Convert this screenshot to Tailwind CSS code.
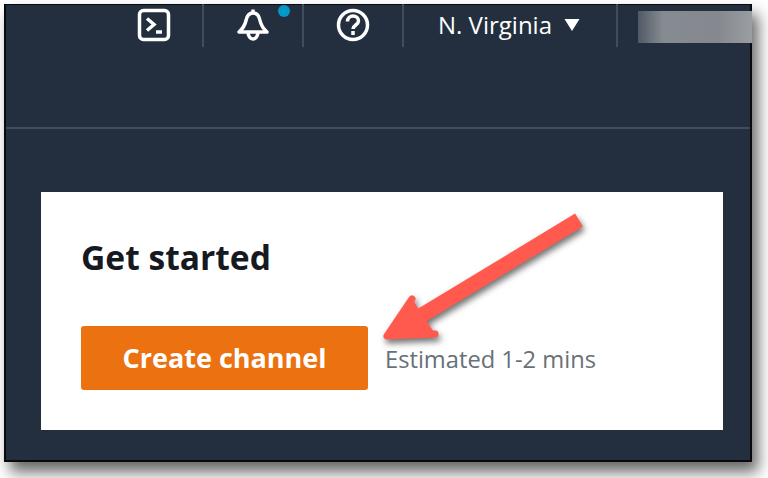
<!DOCTYPE html>
<html lang="en">
<head>
    <meta charset="UTF-8">
    <meta name="viewport" content="width=device-width, initial-scale=1.0">
    <title>Get started</title>
    <script src="https://cdn.jsdelivr.net/npm/@tailwindcss/browser@4"></script>
</head>
<body class="bg-white w-[768px] h-[478px] overflow-hidden font-['Open_Sans','Noto_Sans',sans-serif]">

    <!-- Window -->
    <div class="relative ml-[4px] mt-[4px] w-[748px] h-[458px] bg-[#232f3e] border-2 border-t border-[#0a0a0a] border-b-[2px] shadow-[6px_10px_14px_rgba(0,0,0,0.6)]">

        <!-- Top nav -->
        <div class="flex h-[43px] pl-[98px] items-start">
            <!-- Terminal -->
            <div class="relative shrink-0 w-[100px] h-[43px] flex items-center justify-center border-r-2 border-[#414d5c] -mt-[1px]">
                <svg width="34" height="34" viewBox="0 0 34 34" fill="none" stroke="white" stroke-width="3.500" class="-mt-[2px] ml-[2px]">
                    <rect x="2.500" y="2.500" width="29" height="29" rx="4"/>
                    <path d="M10 10.500l7 6-7 6"/>
                    <path d="M19 24h6"/>
                </svg>
            </div>
            <!-- Bell -->
            <div class="relative shrink-0 w-[100px] h-[43px] flex items-center justify-center border-r-2 border-[#414d5c] -mt-[1px]">
                <svg width="34" height="36" viewBox="0 0 34 36" fill="none" stroke="white" stroke-width="3.500" stroke-linejoin="round" class="-mt-[1px]">
                    <path d="M3 25C7 21.500 9 18 10 13.500C11 8.500 13.500 6 17 6C20.500 6 23 8.500 24 13.500C25 18 27 21.500 31 25Z"/>
                    <path d="M17 2.500v3.500"/>
                    <path d="M12 25c0 4 2.200 7 5 7s5-3 5-7"/>
                </svg>
                <span class="absolute left-[74px] top-[1px] w-[12px] h-[12px] rounded-full bg-[#0397c7]"></span>
            </div>
            <!-- Help -->
            <div class="shrink-0 w-[100px] h-[43px] flex items-center justify-center border-r-2 border-[#414d5c] -mt-[1px]">
                <svg width="34" height="34" viewBox="0 0 34 34" fill="none" stroke="white" stroke-width="3.500" class="-mt-[2px]">
                    <circle cx="17" cy="17" r="14.500"/>
                    <path d="M11.500 13.500c0-3.500 2.500-5.500 5.500-5.500s5.500 2 5.500 5c0 4-5.500 4-5.500 8"/>
                    <path d="M17 23v4"/>
                </svg>
            </div>
            <!-- Region -->
            <div class="shrink-0 w-[214px] h-[43px] flex items-center pl-[34px] gap-[12px] border-r-2 border-[#414d5c] -mt-[1px]">
                <span class="text-white text-[24px] leading-none -mt-[2px] whitespace-nowrap">N. Virginia</span>
                <svg width="16" height="12" viewBox="0 0 16 12" fill="white" class="-mt-[2px]"><path d="M0.500 0h15L8 12z"/></svg>
            </div>
            <!-- Account, blurred out -->
            <div class="ml-[20px] mt-[6px] w-[114px] h-[32px] shrink-0 bg-[linear-gradient(90deg,#4f5965_0%,#868b91_22%,#85898f_70%,#9a9da1_100%)]"></div>
        </div>

        <!-- Divider under nav -->
        <div class="mt-[79px] h-[2px] bg-[#414d5c]"></div>

        <!-- Card -->
        <div class="mt-[63px] ml-[35px] w-[682px] h-[238px] bg-white pl-[40px] pt-[44px]">
            <h1 class="text-[33.600px] leading-[42px] font-bold text-[#16191f]">Get started</h1>
            <div class="flex items-center mt-[48px] gap-[17px]">
                <button class="w-[287px] h-[64px] rounded-[3px] bg-[#ec7211] text-white text-[27px] font-bold">Create channel</button>
                <span class="text-[23.700px] text-[#687078] mt-[3px] whitespace-nowrap">Estimated 1-2 mins</span>
            </div>
        </div>

        <!-- Annotation arrow -->
        <svg class="absolute left-[-6px] top-[-5px] drop-shadow-[2px_4px_3px_rgba(0,0,0,0.55)]" width="768" height="478" viewBox="0 0 768 478" fill="none">
            <path d="M579 220L394 332" stroke="#ff5a4d" stroke-width="15"/>
            <path d="M412 299L387 336L435 334" stroke="#ff5a4d" stroke-width="7" stroke-linecap="round" stroke-linejoin="round" fill="#ff5a4d"/>
        </svg>
    </div>
</body>
</html>
